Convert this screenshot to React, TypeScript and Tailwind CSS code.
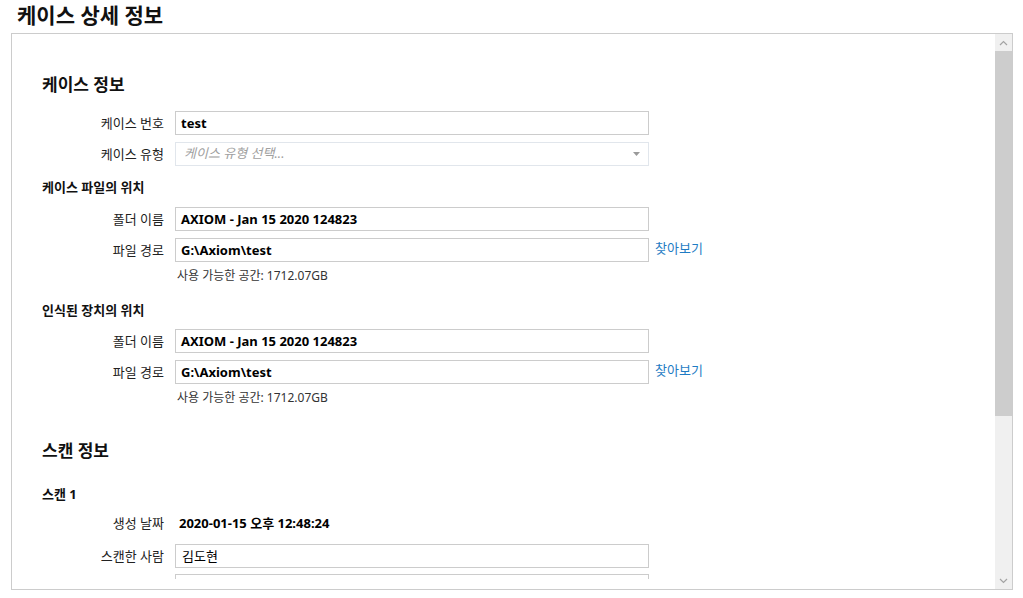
// 케이스 상세 정보 화면
import React from "react";

const font = "font-['Noto_Sans','Noto_Sans_CJK_KR',sans-serif]";

function Label({ children }: { children: React.ReactNode }) {
  return (
    <div className="w-[122px] shrink-0 text-right text-[13px] leading-[24px] text-[#222]">
      {children}
    </div>
  );
}

function TextRow({ label, value, link, className = "" }: { label: string; value: string; link?: boolean; className?: string }) {
  return (
    <div className={"flex items-center " + className}>
      <Label>{label}</Label>
      <div className="ml-[11px] flex h-[24px] w-[474px] items-center border border-[#cccccc] bg-white px-[5px] pt-[1px] text-[13px] font-bold text-black">
        {value}
      </div>
      {link && (
        <span className="ml-[6px] -mt-[4px] text-[13px] leading-[20px] text-[#1f7cc4]">찾아보기</span>
      )}
    </div>
  );
}

function FreeSpace({ className = "" }: { className?: string }) {
  return (
    <div className={"pl-[135px] text-[12px] leading-[18px] text-[#333] " + className}>
      사용 가능한 공간: 1712.07GB
    </div>
  );
}

function SubTitle({ children, className = "" }: { children: React.ReactNode; className?: string }) {
  return <div className={"text-[13px] font-bold leading-[20px] text-[#111] " + className}>{children}</div>;
}

function SectionTitle({ children, className = "" }: { children: React.ReactNode; className?: string }) {
  return <div className={"text-[17px] font-bold leading-[24px] text-[#111] " + className}>{children}</div>;
}

function Scrollbar() {
  return (
    <div className="flex w-[17px] shrink-0 flex-col bg-[#f0f0f0]">
      <div className="flex h-[17px] items-center justify-center">
        <svg width="9" height="6" viewBox="0 0 9 6" fill="none">
          <path d="M1 5 L4.5 1.5 L8 5" stroke="#a3a3a3" strokeWidth="1.2" />
        </svg>
      </div>
      <div className="h-[365px] bg-[#cdcdcd]" />
      <div className="flex-1" />
      <div className="flex h-[17px] items-center justify-center">
        <svg width="9" height="6" viewBox="0 0 9 6" fill="none">
          <path d="M1 1 L4.5 4.5 L8 1" stroke="#a3a3a3" strokeWidth="1.2" />
        </svg>
      </div>
    </div>
  );
}

export default function App() {
  return (
    <div className={"h-[598px] w-[1023px] overflow-hidden bg-white " + font}>
      <h1 className="h-[33px] pl-[17px] text-[21px] font-bold leading-[31px] text-[#111]">케이스 상세 정보</h1>

      <div className="ml-[11px] flex h-[557px] w-[1002px] border border-[#cccccc]">
        <div className="flex-1 pb-[10px]">
          <div className="h-full overflow-hidden pl-[30px] pt-[39px]">
            {/* 케이스 정보 */}
            <SectionTitle>케이스 정보</SectionTitle>
            <TextRow className="mt-[14px]" label="케이스 번호" value="test" />
            <div className="mt-[7px] flex items-center">
              <Label>케이스 유형</Label>
              <div className="ml-[11px] flex h-[24px] w-[474px] items-center justify-between border border-[#e1e6ec] bg-white pl-[8px] pr-[8px] text-[13px] italic text-[#a0a0a0]">
                <span>케이스 유형 선택...</span>
                <svg width="7" height="4" viewBox="0 0 7 4">
                  <path d="M0 0 L7 0 L3.5 4 Z" fill="#9a9a9a" />
                </svg>
              </div>
            </div>

            {/* 케이스 파일의 위치 */}
            <SubTitle className="mt-[11px]">케이스 파일의 위치</SubTitle>
            <TextRow className="mt-[10px]" label="폴더 이름" value="AXIOM - Jan 15 2020 124823" />
            <TextRow className="mt-[7px]" label="파일 경로" value="G:\Axiom\test" link />
            <FreeSpace className="mt-[5px]" />

            {/* 인식된 장치의 위치 */}
            <SubTitle className="mt-[15px]">인식된 장치의 위치</SubTitle>
            <TextRow className="mt-[9px]" label="폴더 이름" value="AXIOM - Jan 15 2020 124823" />
            <TextRow className="mt-[7px]" label="파일 경로" value="G:\Axiom\test" link />
            <FreeSpace className="mt-[5px]" />

            {/* 스캔 정보 */}
            <SectionTitle className="mt-[32px]">스캔 정보</SectionTitle>
            <SubTitle className="mt-[21px]">스캔 1</SubTitle>
            <div className="mt-[7px] flex items-center">
              <Label>생성 날짜</Label>
              <div className="ml-[15px] text-[13px] font-bold leading-[24px] text-black">2020-01-15 오후 12:48:24</div>
            </div>
            <div className="mt-[9px] flex items-center">
              <Label>스캔한 사람</Label>
              <div className="ml-[11px] flex h-[24px] w-[474px] items-center border border-[#cccccc] bg-white px-[6px] pt-[1px] text-[13px] text-black">
                김도현
              </div>
            </div>
            <div className="mt-[6px] flex items-center">
              <Label>&nbsp;</Label>
              <div className="ml-[11px] h-[24px] w-[474px] border border-[#cccccc] bg-white" />
            </div>
          </div>
        </div>
        <Scrollbar />
      </div>
    </div>
  );
}
